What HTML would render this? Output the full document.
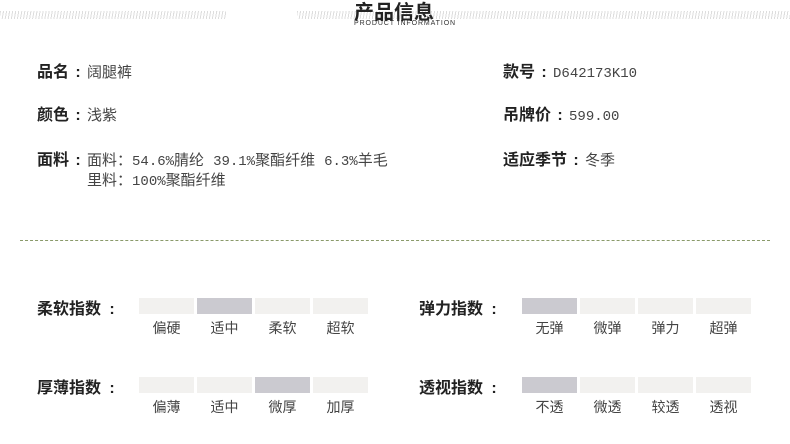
<!DOCTYPE html>
<html><head><meta charset="utf-8"><style>
*{margin:0;padding:0;box-sizing:border-box}
body{width:790px;height:444px;background:#fff;position:relative;overflow:hidden;font-family:"Liberation Sans","Noto Sans CJK SC",sans-serif;color:#333}
.a{position:absolute;white-space:nowrap}
.stripe{position:absolute;top:11px;height:8px;background:repeating-linear-gradient(100deg,#ddd 0 1px,#fff 1px 3px)}
.l{font-weight:bold;font-size:16px;color:#222}
.c{display:inline-block;width:18px;text-align:center;font-weight:bold}
.v{font-size:15px;color:#444}
.m{font-family:"Liberation Mono","Noto Sans CJK SC",monospace;font-size:14px}
.sp{display:inline-block;width:9px}
.bar{position:absolute;top:0;width:55px;height:16px;background:#f2f1ef}
.bar.on{background:#cbcad0}
.t{position:absolute;top:20px;width:55px;text-align:center;font-size:14px;color:#444}
</style></head><body>
<div class="stripe" style="left:0;width:226px"></div>
<div class="stripe" style="left:297px;width:493px"></div>
<div class="a" style="left:354px;top:-4px;font-size:20px;font-weight:bold;color:#222">产品信息</div>
<div class="a" style="left:354px;top:20px;font-size:7px;letter-spacing:0.9px;color:#333">PRODUCT INFORMATION</div>

<div class="a" style="left:37px;top:58px"><span class="l">品名<span class="c">:</span></span><span class="v">阔腿裤</span></div>
<div class="a" style="left:37px;top:101px"><span class="l">颜色<span class="c">:</span></span><span class="v">浅紫</span></div>
<div class="a" style="left:37px;top:146px"><span class="l">面料<span class="c">:</span></span><span class="v">面料：<span class="m">54.6%</span>腈纶<span class="sp"></span><span class="m">39.1%</span>聚酯纤维<span class="sp"></span><span class="m">6.3%</span>羊毛</span></div>
<div class="a v" style="left:87px;top:169px">里料：<span class="m">100%</span>聚酯纤维</div>

<div class="a" style="left:503px;top:58px"><span class="l">款号<span class="c">:</span></span><span class="v m">D642173K10</span></div>
<div class="a" style="left:503px;top:101px"><span class="l">吊牌价<span class="c">:</span></span><span class="v m">599.00</span></div>
<div class="a" style="left:503px;top:146px"><span class="l">适应季节<span class="c">:</span></span><span class="v">冬季</span></div>

<div class="a" style="left:20px;top:240px;width:750px;border-top:1px dashed #8a9a6a"></div>

<div class="a l" style="left:37px;top:295px">柔软指数<span class="c" style="width:22px">:</span></div>
<div class="a" style="left:139px;top:298px">
<div class="bar" style="left:0"></div><div class="bar on" style="left:58px"></div><div class="bar" style="left:116px"></div><div class="bar" style="left:174px"></div>
<div class="t" style="left:0">偏硬</div><div class="t" style="left:58px">适中</div><div class="t" style="left:116px">柔软</div><div class="t" style="left:174px">超软</div></div>

<div class="a l" style="left:419px;top:295px">弹力指数<span class="c" style="width:22px">:</span></div>
<div class="a" style="left:522px;top:298px">
<div class="bar on" style="left:0"></div><div class="bar" style="left:58px"></div><div class="bar" style="left:116px"></div><div class="bar" style="left:174px"></div>
<div class="t" style="left:0">无弹</div><div class="t" style="left:58px">微弹</div><div class="t" style="left:116px">弹力</div><div class="t" style="left:174px">超弹</div></div>

<div class="a l" style="left:37px;top:374px">厚薄指数<span class="c" style="width:22px">:</span></div>
<div class="a" style="left:139px;top:377px">
<div class="bar" style="left:0"></div><div class="bar" style="left:58px"></div><div class="bar on" style="left:116px"></div><div class="bar" style="left:174px"></div>
<div class="t" style="left:0">偏薄</div><div class="t" style="left:58px">适中</div><div class="t" style="left:116px">微厚</div><div class="t" style="left:174px">加厚</div></div>

<div class="a l" style="left:419px;top:374px">透视指数<span class="c" style="width:22px">:</span></div>
<div class="a" style="left:522px;top:377px">
<div class="bar on" style="left:0"></div><div class="bar" style="left:58px"></div><div class="bar" style="left:116px"></div><div class="bar" style="left:174px"></div>
<div class="t" style="left:0">不透</div><div class="t" style="left:58px">微透</div><div class="t" style="left:116px">较透</div><div class="t" style="left:174px">透视</div></div>
</body></html>
